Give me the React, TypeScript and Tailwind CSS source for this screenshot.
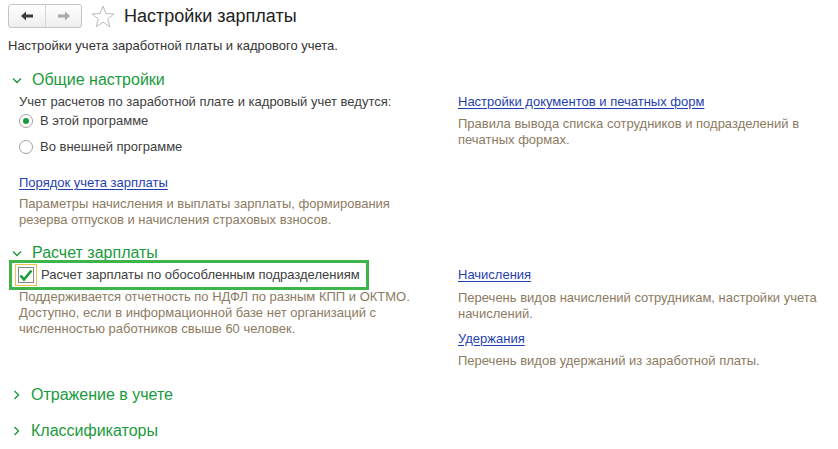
import React from "react";

const FONT = { fontFamily: '"Liberation Sans", Arial, sans-serif' };

function ChevronDown() {
  return (
    <svg width="10" height="7" viewBox="0 0 10 7" className="mr-[10px] ml-[12px]">
      <path d="M1 1.5 L5 5.5 L9 1.5" fill="none" stroke="#1a9a3c" strokeWidth="1.4" />
    </svg>
  );
}

function ChevronRight() {
  return (
    <svg width="7" height="10" viewBox="0 0 7 10" className="mr-[11px] ml-[13px]">
      <path d="M1.5 1 L5.5 5 L1.5 9" fill="none" stroke="#1a9a3c" strokeWidth="1.4" />
    </svg>
  );
}

function SectionHeader({ title, open }: { title: string; open?: boolean }) {
  return (
    <div className="flex items-center h-[18px] text-[16px] leading-[18px] text-[#1a9a3c]">
      {open ? <ChevronDown /> : <ChevronRight />}
      <span>{title}</span>
    </div>
  );
}

function Arrow({ dir, color }: { dir: "left" | "right"; color: string }) {
  const d =
    dir === "left"
      ? "M0 5 L5 0.5 L5 3.5 L12 3.5 L12 6.5 L5 6.5 L5 9.5 Z"
      : "M12 5 L7 0.5 L7 3.5 L0 3.5 L0 6.5 L7 6.5 L7 9.5 Z";
  return (
    <svg width="12" height="10" viewBox="0 0 12 10">
      <path d={d} fill={color} />
    </svg>
  );
}

function Link({ children }: { children: React.ReactNode }) {
  return (
    <a href="#" className="text-[#1f3fb0] underline underline-offset-2 decoration-[#1f3fb0] h-4 leading-4 block">
      {children}
    </a>
  );
}

function Note({ children }: { children: React.ReactNode }) {
  return <p className="text-[#8c7b62] leading-4">{children}</p>;
}

function Radio({ checked, label }: { checked?: boolean; label: string }) {
  return (
    <label className="flex items-center h-5 gap-[7px]">
      <span className="w-[14px] h-[14px] rounded-full border border-[#a0a0a0] bg-white flex items-center justify-center">
        {checked && <span className="w-[6px] h-[6px] rounded-full bg-[#1a9a3c]" />}
      </span>
      <span>{label}</span>
    </label>
  );
}

export default function App() {
  return (
    <div className="w-[838px] h-[449px] bg-white text-[13px] text-[#404040] overflow-hidden" style={FONT}>
      {/* header */}
      <div className="flex items-center pt-[4px] pl-[8px] h-[28px]">
        <div className="flex h-[24px] w-[74px] rounded-[3px] border border-[#c4c4c4] bg-gradient-to-b from-white to-[#eeeeee]">
          <div className="w-[37px] flex items-center justify-center border-r border-[#d4d4d4]">
            <Arrow dir="left" color="#3c3c3c" />
          </div>
          <div className="flex-1 flex items-center justify-center">
            <Arrow dir="right" color="#a8a8a8" />
          </div>
        </div>
        <svg width="24" height="23" viewBox="0 0 24 23" className="ml-[9px]">
          <path
            d="M12 1 L14.9 8.6 L23 8.9 L16.6 13.9 L18.9 21.8 L12 17.2 L5.1 21.8 L7.4 13.9 L1 8.9 L9.1 8.6 Z"
            fill="none"
            stroke="#bdbdbd"
            strokeWidth="1"
          />
        </svg>
        <h1 className="ml-[9px] text-[18px] leading-[22px] text-[#222]">Настройки зарплаты</h1>
      </div>

      <p className="pl-[8px] mt-[10px] leading-4 text-[#333]">Настройки учета заработной платы и кадрового учета.</p>

      {/* Общие настройки */}
      <div className="mt-[17px]">
        <SectionHeader title="Общие настройки" open />
        <div className="grid grid-cols-[439px_1fr] pl-[19px] mt-[5px]">
          <div>
            <div className="leading-4 h-4">Учет расчетов по заработной плате и кадровый учет ведутся:</div>
            <div className="mt-[1px] flex flex-col gap-[6px]">
              <Radio checked label="В этой программе" />
              <Radio label="Во внешней программе" />
            </div>
            <div className="mt-[18px]">
              <Link>Порядок учета зарплаты</Link>
            </div>
            <div className="mt-[5px]">
              <Note>
                Параметры начисления и выплаты зарплаты, формирования
                <br />
                резерва отпусков и начисления страховых взносов.
              </Note>
            </div>
          </div>
          <div>
            <Link>Настройки документов и печатных форм</Link>
            <div className="mt-[6px]">
              <Note>
                Правила вывода списка сотрудников и подразделений в
                <br />
                печатных формах.
              </Note>
            </div>
          </div>
        </div>
      </div>

      {/* Расчет зарплаты */}
      <div className="mt-[16px]">
        <SectionHeader title="Расчет зарплаты" open />
        <div className="grid grid-cols-[439px_1fr] pl-[19px] mt-[-2px]">
          <div>
            <div className="-ml-[10px] w-[360px] h-[30px] border-[3px] border-[#3db54a] flex items-center pl-[3px]">
              <span className="w-[22px] h-[22px] border border-[#f0c24a] flex items-center justify-center">
                <span className="w-[16px] h-[16px] border border-[#8a8a8a] bg-white flex items-center justify-center">
                  <svg width="14" height="13" viewBox="0 0 14 13">
                    <path d="M1.5 6.5 L5 10.5 L12.5 1.5" fill="none" stroke="#1a9a3c" strokeWidth="2.6" />
                  </svg>
                </span>
              </span>
              <span className="ml-[4px]">Расчет зарплаты по обособленным подразделениям</span>
            </div>
            <div className="mt-[-1px]">
              <Note>
                Поддерживается отчетность по НДФЛ по разным КПП и ОКТМО.
                <br />
                Доступно, если в информационной базе нет организаций с
                <br />
                численностью работников свыше 60 человек.
              </Note>
            </div>
          </div>
          <div className="pt-[7px]">
            <Link>Начисления</Link>
            <div className="mt-[7px]">
              <Note>
                Перечень видов начислений сотрудникам, настройки учета
                <br />
                начислений.
              </Note>
            </div>
            <div className="mt-[9px]">
              <Link>Удержания</Link>
            </div>
            <div className="mt-[6px]">
              <Note>Перечень видов удержаний из заработной платы.</Note>
            </div>
          </div>
        </div>
      </div>

      <div className="mt-[17px]">
        <SectionHeader title="Отражение в учете" />
      </div>
      <div className="mt-[18px]">
        <SectionHeader title="Классификаторы" />
      </div>
    </div>
  );
}
